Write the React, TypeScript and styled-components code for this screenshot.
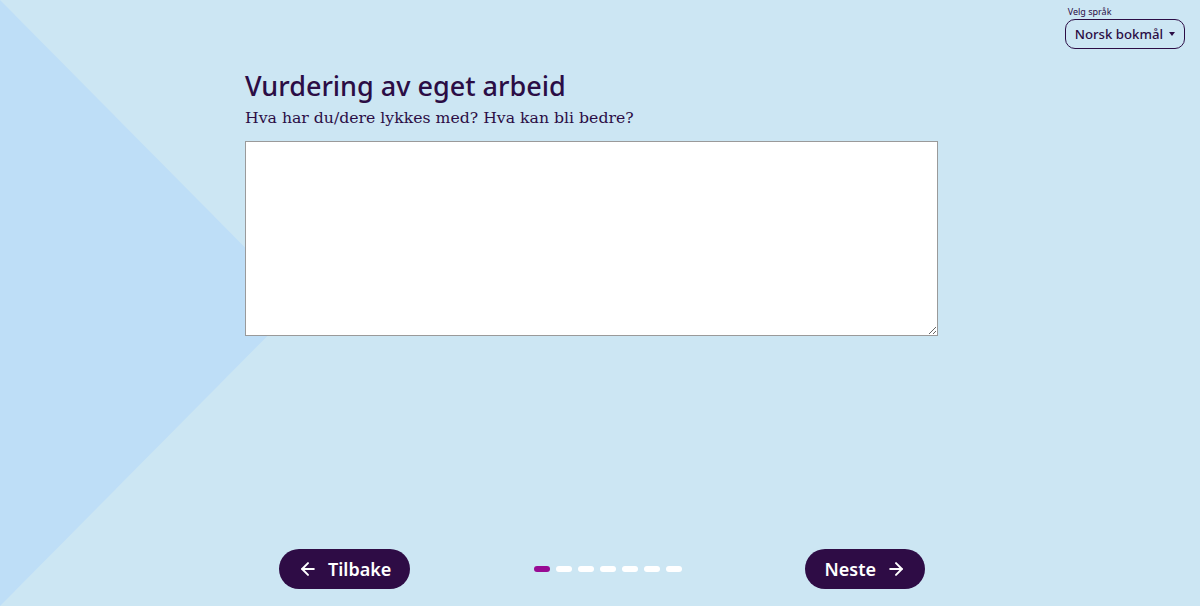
import styled, { createGlobalStyle } from "styled-components";
import { ArrowLeft, ArrowRight } from "lucide-react";

const GlobalStyle = createGlobalStyle`
  html, body {
    margin: 0;
    padding: 0;
    height: 100%;
  }
  body {
    background: #cce6f3;
    color: #2b0d45;
    font-family: "Noto Sans", sans-serif;
  }
`;

const STEPS = 7;

const App = () => {
  return (
    <>
      <GlobalStyle />
      <Page>
        <Backdrop />
        <TopBar>
          <LangPicker>
            <LangLabel>Velg språk</LangLabel>
            <LangButton>
              Norsk bokmål
              <Caret />
            </LangButton>
          </LangPicker>
        </TopBar>

        <Main>
          <Title>Vurdering av eget arbeid</Title>
          <Subtitle>Hva har du/dere lykkes med? Hva kan bli bedre?</Subtitle>
          <Answer />
        </Main>

        <Footer>
          <NavButton>
            <ArrowLeft size={20} strokeWidth={2.4} />
            Tilbake
          </NavButton>
          <Dots>
            {Array.from({ length: STEPS }).map((_, i) => (
              <Dot key={i} $active={i === 0} />
            ))}
          </Dots>
          <NavButton>
            Neste
            <ArrowRight size={20} strokeWidth={2.4} />
          </NavButton>
        </Footer>
      </Page>
    </>
  );
};

export default App;

const Page = styled.div`
  position: relative;
  height: 606px;
  display: flex;
  flex-direction: column;
  overflow: hidden;
`;

const Backdrop = styled.div`
  position: absolute;
  inset: 0;
  background: #bedef7;
  clip-path: polygon(0 0, 300px 303px, 0 100%);
  pointer-events: none;
`;

const TopBar = styled.header`
  position: relative;
  display: flex;
  justify-content: flex-end;
  padding: 6px 15px 0 0;
`;

const LangPicker = styled.div`
  display: flex;
  flex-direction: column;
  gap: 2px;
`;

const LangLabel = styled.span`
  font-size: 9px;
  line-height: 11px;
  padding-left: 3px;
  color: #2b0d45;
`;

const LangButton = styled.button`
  display: flex;
  align-items: center;
  gap: 6px;
  height: 30px;
  padding: 0 9px;
  border: 1px solid #2b0d45;
  border-radius: 10px;
  background: transparent;
  color: #2b0d45;
  font-family: "Noto Sans", sans-serif;
  font-size: 13.2px;
  font-weight: 500;
`;

const Caret = styled.span`
  width: 0;
  height: 0;
  border-left: 3.5px solid transparent;
  border-right: 3.5px solid transparent;
  border-top: 4px solid #2b0d45;
`;

const Main = styled.main`
  position: relative;
  flex: 1;
  display: flex;
  flex-direction: column;
  padding: 19px 262px 0 245px;
`;

const Title = styled.h1`
  margin: 0;
  font-family: "Noto Sans", sans-serif;
  font-size: 27px;
  font-weight: 500;
  line-height: 36px;
  color: #2b0d45;
`;

const Subtitle = styled.p`
  margin: 2px 0 11px;
  font-family: "DejaVu Serif", serif;
  font-size: 15.7px;
  line-height: 24px;
  color: #2b0d45;
`;

const Answer = styled.textarea`
  box-sizing: border-box;
  width: 693px;
  height: 195px;
  border: 1px solid #9a9a9a;
  background: #fff;
  resize: vertical;
  font-family: "Noto Sans", sans-serif;
  font-size: 16px;
`;

const Footer = styled.footer`
  position: relative;
  display: flex;
  align-items: center;
  justify-content: space-between;
  padding: 0 275px 17px 279px;
`;

const NavButton = styled.button`
  display: flex;
  align-items: center;
  gap: 10px;
  height: 40px;
  padding: 0 19px;
  border: none;
  border-radius: 20px;
  background: #2e0c45;
  color: #fff;
  font-family: "Noto Sans", sans-serif;
  font-size: 18px;
  font-weight: 600;
`;

const Dots = styled.div`
  display: flex;
  gap: 6px;
`;

const Dot = styled.span<{ $active: boolean }>`
  width: 16px;
  height: 6px;
  border-radius: 3px;
  background: ${(p) => (p.$active ? "#980b93" : "#ffffff")};
`;
